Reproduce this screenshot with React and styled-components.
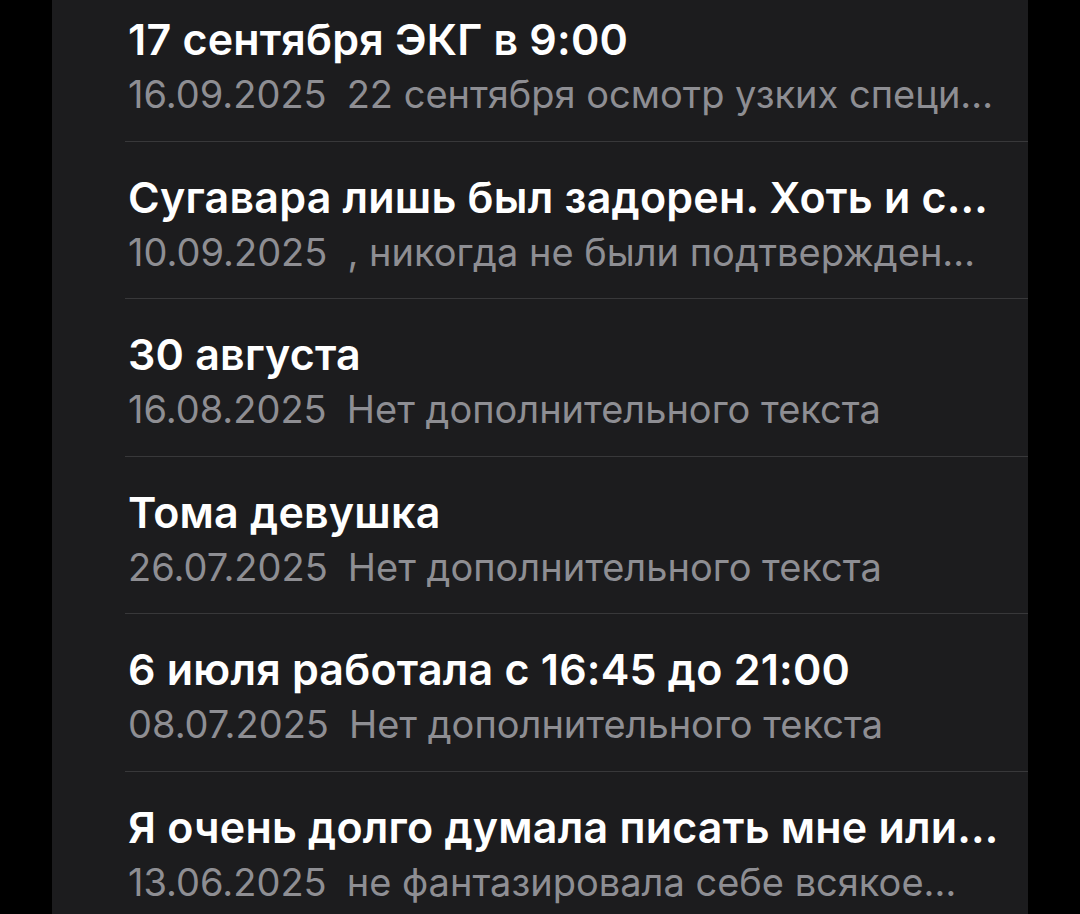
import React from "react";
import styled, { createGlobalStyle } from "styled-components";

const GlobalStyle = createGlobalStyle`
  html, body {
    margin: 0;
    padding: 0;
    background: #000;
    height: 914px;
    overflow: hidden;
  }
  body {
    font-family: Inter, "Noto Sans", "Liberation Sans", sans-serif;
    -webkit-font-smoothing: antialiased;
  }
`;

const Screen = styled.div`
  width: 1080px;
  height: 914px;
  background: #000;
  display: flex;
  overflow: hidden;
`;

const Panel = styled.div`
  margin-left: 52px;
  width: 976px;
  height: 914px;
  background: #1c1c1e;
  overflow: hidden;
`;

const List = styled.div`
  display: flex;
  flex-direction: column;
  margin-top: -16px;
`;

const Row = styled.div`
  box-sizing: border-box;
  height: 157.5px;
  margin-left: 73px;
  padding: 28px 16px 0 3px;
  border-bottom: ${({ $last }) => ($last ? "none" : "1.5px solid #38383a")};
  display: flex;
  flex-direction: column;
`;

const Title = styled.div`
  color: #fff;
  font-size: 43px;
  font-weight: 600;
  line-height: 54px;
  letter-spacing: 0.2px;
  white-space: nowrap;
  overflow: hidden;
  text-overflow: ellipsis;
`;

const Sub = styled.div`
  display: flex;
  gap: 20px;
  color: #8e8e93;
  font-size: 38px;
  font-weight: 400;
  line-height: 56px;
  white-space: nowrap;
  overflow: hidden;
`;

const Date = styled.span`
  flex: none;
`;

const Preview = styled.span`
  overflow: hidden;
  text-overflow: ellipsis;
`;

const notes = [
  { title: "17 сентября ЭКГ в 9:00", date: "16.09.2025", text: "22 сентября осмотр узких специ…" },
  { title: "Сугавара лишь был задорен. Хоть и с…", date: "10.09.2025", text: ", никогда не были подтвержден…" },
  { title: "30 августа", date: "16.08.2025", text: "Нет дополнительного текста" },
  { title: "Тома девушка", date: "26.07.2025", text: "Нет дополнительного текста" },
  { title: "6 июля работала с 16:45 до 21:00", date: "08.07.2025", text: "Нет дополнительного текста" },
  { title: "Я очень долго думала писать мне или…", date: "13.06.2025", text: "не фантазировала себе всякое…" },
];

export default function App() {
  return (
    <Screen>
      <GlobalStyle />
      <Panel>
        <List>
          {notes.map((n, i) => (
            <Row key={i} $last={i === notes.length - 1}>
              <Title>{n.title}</Title>
              <Sub>
                <Date>{n.date}</Date>
                <Preview>{n.text}</Preview>
              </Sub>
            </Row>
          ))}
        </List>
      </Panel>
    </Screen>
  );
}
